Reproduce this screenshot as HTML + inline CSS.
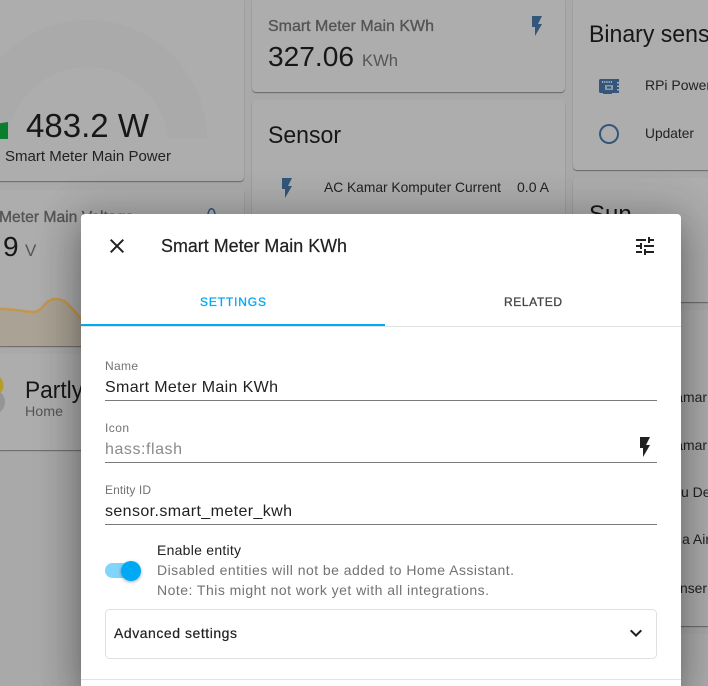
<!DOCTYPE html>
<html><head><meta charset="utf-8">
<style>
html,body{margin:0;padding:0;width:708px;height:686px;overflow:hidden;background:#a9a9a9}
#w{position:absolute;left:0;top:0;width:708px;height:686px;overflow:hidden;background:#a9a9a9}
.c{position:absolute;background:#adadad;border-radius:4px;box-shadow:0 1px 1px rgba(0,0,0,.4)}
svg{position:absolute;left:0;top:0}
text{font-family:"Liberation Sans",sans-serif}
#d{position:absolute;left:81px;top:214px;width:600px;height:472px;background:#fff;border-radius:4px 4px 0 0;box-shadow:0 11px 15px -7px rgba(0,0,0,.2),0 24px 38px 3px rgba(0,0,0,.14),0 9px 46px 8px rgba(0,0,0,.12),0 0 40px 6px rgba(0,0,0,.12)}
</style></head><body>
<div id="w">
<div class="c" style="left:0;top:0;width:244px;height:181px;border-radius:0 0 4px 0"></div>
<div class="c" style="left:0;top:190px;width:244px;height:156px;border-radius:0 4px 0 0"></div>
<div class="c" style="left:0;top:354px;width:244px;height:96px;border-radius:0 4px 4px 0"></div>
<div class="c" style="left:252px;top:0;width:313px;height:92px;border-radius:0 0 4px 4px"></div>
<div class="c" style="left:252px;top:100px;width:313px;height:300px"></div>
<div class="c" style="left:573px;top:0;width:135px;height:170px;border-radius:0 0 0 4px"></div>
<div class="c" style="left:573px;top:178px;width:135px;height:124px;border-radius:4px 0 0 4px"></div>
<div class="c" style="left:573px;top:310px;width:135px;height:316px;border-radius:4px 0 0 4px"></div>
<div class="c" style="left:573px;top:634px;width:135px;height:52px;border-radius:4px 0 0 0"></div>
<svg width="708" height="686" viewBox="0 0 708 686">
  <path d="M-31 139A119 119 0 0 1 207 139H168A81 81 0 0 0 7 139Z" fill="#aaaaaa"/>
  <path d="M-5 139V124L8 122V139Z" fill="#0a7d2e"/>
  <g fill="#171717">
    <text x="26" y="137" font-size="33" textLength="123" lengthAdjust="spacingAndGlyphs">483.2 W</text>
    <text x="5" y="161" font-size="14.5" textLength="166" lengthAdjust="spacingAndGlyphs" fill="#222">Smart Meter Main Power</text>
    <text x="3" y="256" font-size="28">9</text>
    <text x="25" y="398" font-size="24" textLength="130" lengthAdjust="spacingAndGlyphs">Partly cloudy</text>
    <text x="268" y="66" font-size="28" textLength="86" lengthAdjust="spacingAndGlyphs">327.06</text>
    <text x="589" y="42" font-size="24" textLength="141" lengthAdjust="spacingAndGlyphs">Binary sensor</text>
    <text x="268" y="143" font-size="24" textLength="73" lengthAdjust="spacingAndGlyphs">Sensor</text>
    <text x="589" y="222" font-size="24">Sun</text>
  </g>
  <g fill="#222" font-size="14">
    <text x="645" y="90" textLength="66" lengthAdjust="spacingAndGlyphs">RPi Power</text>
    <text x="645" y="138" textLength="49" lengthAdjust="spacingAndGlyphs">Updater</text>
    <text x="324" y="192" textLength="177" lengthAdjust="spacingAndGlyphs">AC Kamar Komputer Current</text>
    <text x="517" y="192" textLength="32" lengthAdjust="spacingAndGlyphs">0.0 A</text>
    <text x="666" y="402" textLength="41" lengthAdjust="spacingAndGlyphs">Kamar</text>
    <text x="666" y="450" textLength="41" lengthAdjust="spacingAndGlyphs">Kamar</text>
    <text x="681" y="497">u Dew</text>
    <text x="682" y="544">a Air</text>
    <text x="680" y="593" textLength="27" lengthAdjust="spacingAndGlyphs">nser</text>
  </g>
  <g fill="#555">
    <text x="268" y="31" font-size="16" textLength="166" lengthAdjust="spacingAndGlyphs" stroke="#555" stroke-width=".35">Smart Meter Main KWh</text>
    <text x="362" y="66" font-size="17" textLength="36" lengthAdjust="spacingAndGlyphs">KWh</text>
    <text x="-1" y="222" font-size="16" textLength="135" lengthAdjust="spacingAndGlyphs" stroke="#555" stroke-width=".35">Meter Main Voltage</text>
    <text x="25" y="256" font-size="17">V</text>
    <text x="25" y="416" font-size="14" textLength="38" lengthAdjust="spacingAndGlyphs">Home</text>
  </g>
  <path d="M-2 309C10 308 25 312 33 312C43 312 44 299 56 299C68 299 72 311 85 322V346H-2Z" fill="#aaa294"/>
  <path d="M-2 309C10 308 25 312 33 312C43 312 44 299 56 299C68 299 72 311 85 322" fill="none" stroke="#c2974f" stroke-width="2.6"/>
  <path d="M0 377C2 379 3.500 383 3.500 386C3.500 389 2.500 391 0 393Z" fill="#b59d2c"/>
  <path d="M0 392C3 394 5 398 5 402C5 406 3 410 0 412Z" fill="#959595"/>
  <g fill="#34567a">
    <path transform="translate(525 14)" d="M7,2V13H10V22L17,10H13L17,2H7Z"/>
    <path transform="translate(275 176)" d="M7,2V13H10V22L17,10H13L17,2H7Z"/>
    <path transform="translate(597 122)" d="M12,20A8,8 0 0,1 4,12A8,8 0 0,1 12,4A8,8 0 0,1 20,12A8,8 0 0,1 12,20M12,2A10,10 0 0,0 2,12A10,10 0 0,0 12,22A10,10 0 0,0 22,12A10,10 0 0,0 12,2Z"/>
    <path d="M600 79H619V93H612V94H603V93H600L599 92V80Z"/>
    <path d="M207 218C207 211 209 208 211.500 208C214 208 216 211 216 218H214.500C214.500 212 213 209.500 211.500 209.500C210 209.500 208.500 212 208.500 218Z"/>
  </g>
  <g fill="#a3adb8">
    <path d="M602 81h1.200v2h-1.200zM604.200 81h1.200v2h-1.200zM606.400 81h1.200v2h-1.200zM608.600 81h1.200v2h-1.200zM610.800 81h1.200v2h-1.200z"/>
    <path d="M605 85h8v5h-8zM607 86.500v2h4v-2z" fill-rule="evenodd" opacity=".8"/>
    <path d="M617 82h2v1.500h-2zM617 85.500h2v1.500h-2zM617 89h2v1.500h-2z"/>
  </g>
</svg>
<div id="d"></div>
<svg width="708" height="686" viewBox="0 0 708 686">
  <rect x="81" y="326" width="600" height="1" fill="#e2e2e2"/>
  <rect x="81" y="324" width="304" height="2" fill="#03a9f4"/>
  <path transform="translate(105 234)" fill="#212121" d="M19,6.410L17.590,5L12,10.590L6.410,5L5,6.410L10.590,12L5,17.590L6.410,19L12,13.410L17.590,19L19,17.590L13.410,12L19,6.410Z"/>
  <path transform="translate(633 234)" fill="#212121" d="M3,17V19H9V17H3M3,5V7H13V5H3M13,21V19H21V17H13V15H11V21H13M7,9V11H3V13H7V15H9V9H7M21,13V11H11V13H21M15,9H17V7H21V5H17V3H15V9Z"/>
  <path transform="translate(633 435)" fill="#212121" d="M7,2V13H10V22L17,10H13L17,2H7Z"/>
  <text x="161" y="252" font-size="18" textLength="186" lengthAdjust="spacingAndGlyphs" fill="#212121" stroke="#212121" stroke-width=".2">Smart Meter Main KWh</text>
  <text x="200" y="306" font-size="12" textLength="66" fill="#03a9f4" stroke="#03a9f4" stroke-width=".3">SETTINGS</text>
  <text x="504" y="306" font-size="12" textLength="58" fill="#444" stroke="#444" stroke-width=".3">RELATED</text>
  <g font-size="12" fill="#737373">
    <text x="105" y="370" textLength="33">Name</text>
    <text x="105" y="432" textLength="24">Icon</text>
    <text x="105" y="494" textLength="46">Entity ID</text>
  </g>
  <g font-size="16" fill="#212121">
    <text x="105" y="392" textLength="173">Smart Meter Main KWh</text>
    <text x="105" y="454" textLength="77" fill="#8a8a8a">hass:flash</text>
    <text x="105" y="516" textLength="187">sensor.smart_meter_kwh</text>
  </g>
  <g fill="#7a7a7a">
    <rect x="105" y="400" width="552" height="1"/>
    <rect x="105" y="462" width="552" height="1"/>
    <rect x="105" y="524" width="552" height="1"/>
  </g>
  <rect x="105" y="563" width="32" height="15" rx="7.500" fill="#81d4fa"/>
  <defs><filter id="s" x="-50%" y="-50%" width="200%" height="200%"><feDropShadow dx="0" dy="1" stdDeviation="1.500" flood-opacity=".35"/></filter></defs>
  <circle cx="131" cy="571" r="10" fill="#03a9f4" filter="url(#s)"/>
  <text x="157" y="555" font-size="14" textLength="84" fill="#212121">Enable entity</text>
  <text x="157" y="575" font-size="14" textLength="357" fill="#727272">Disabled entities will not be added to Home Assistant.</text>
  <text x="157" y="595" font-size="14" textLength="332" fill="#727272">Note: This might not work yet with all integrations.</text>
  <rect x="105.500" y="609.500" width="551" height="49" rx="4" fill="#fff" stroke="#e0e0e0"/>
  <text x="114" y="638" font-size="14" textLength="123" fill="#212121" stroke="#212121" stroke-width=".2">Advanced settings</text>
  <path transform="translate(624 621)" fill="#212121" d="M7.410,8.580L12,13.170L16.590,8.580L18,10L12,16L6,10L7.410,8.580Z"/>
  <rect x="81" y="679" width="600" height="1" fill="#e2e2e2"/>
</svg>
</div>
</body></html>
